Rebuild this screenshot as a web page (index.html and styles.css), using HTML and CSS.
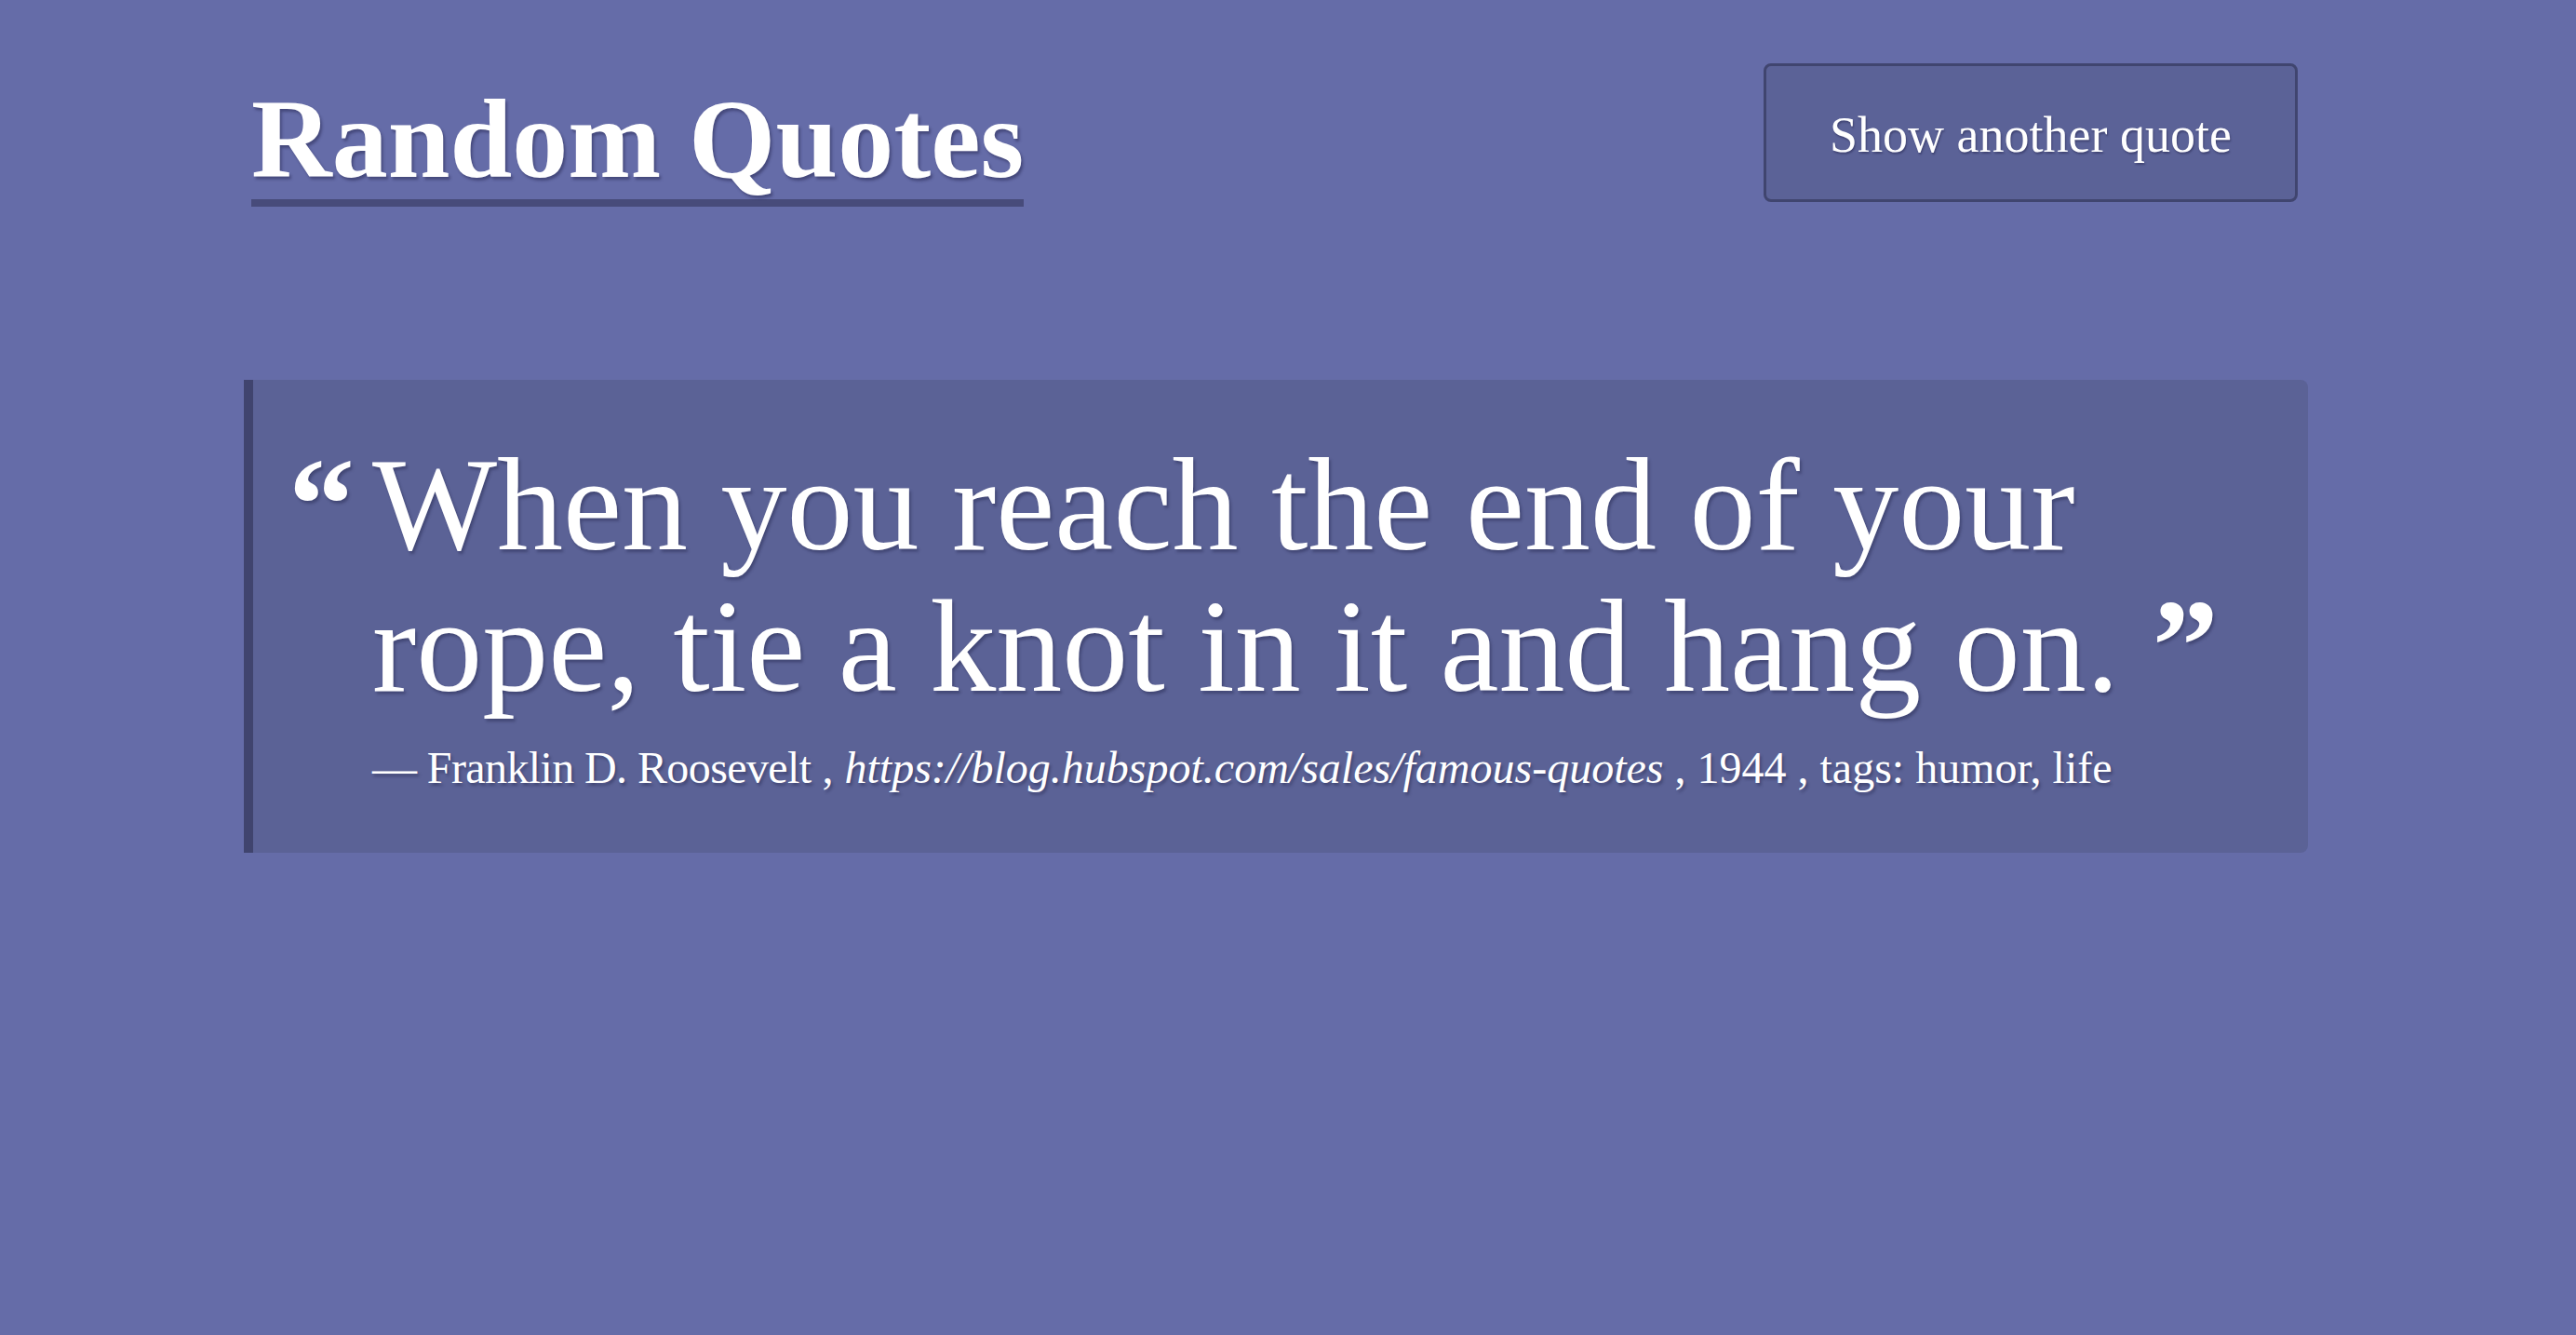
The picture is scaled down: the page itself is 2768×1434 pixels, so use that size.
FILE: index.html
```html
<!DOCTYPE html>
<html lang="en">
<head>
<meta charset="utf-8">
<title>Random Quotes</title>
<link rel="stylesheet" href="styles.css">
</head>
<body>
<div class="page">
  <header class="header">
    <h1 class="title">Random Quotes</h1>
    <button class="btn" type="button">Show another quote</button>
  </header>
  <main class="card">
    <span class="open-mark">“</span>
    <div class="body">
      <p class="quote">When you reach the end of your rope, tie a knot in it and hang on. <span class="close-mark">”</span></p>
      <p class="attr"><span class="author">— Franklin D. Roosevelt</span> , <cite class="src">https://blog.hubspot.com/sales/famous-quotes</cite> , 1944 , tags: humor, life</p>
    </div>
  </main>
</div>
</body>
</html>
```
FILE: styles.css
```css
html, body {
  margin: 0;
  padding: 0;
}
body {
  background: #656ca8;
  color: #ffffff;
  font-family: "Liberation Serif", "Times New Roman", serif;
  min-height: 1434px;
}
.page {
  margin-left: 262px;
  width: 2218px;
  padding-top: 68px;
}
.header {
  display: flex;
  justify-content: space-between;
  align-items: flex-start;
  padding: 0 11px 0 8px;
}
.title {
  margin: 22px 0 0 0;
  font-size: 120px;
  line-height: 120px;
  font-weight: 700;
  padding-bottom: 4px;
  border-bottom: 8px solid #474b7a;
  text-shadow: 2px 3px 3px rgba(30, 32, 70, 0.45);
}
.btn {
  font-family: "Liberation Serif", "Times New Roman", serif;
  font-size: 54px;
  line-height: 65px;
  color: #ffffff;
  background: #5b6297;
  border: 3px solid #40456f;
  border-radius: 8px;
  padding: 42px 68px 36px;
  text-shadow: 1px 2px 2px rgba(30, 32, 70, 0.45);
  cursor: pointer;
}
.card {
  display: flex;
  align-items: flex-start;
  margin-top: 186px;
  background: #5b6296;
  border-left: 10px solid #40446e;
  border-radius: 0 8px 8px 0;
  padding: 58px 80px 64px 38px;
  text-shadow: 2px 3px 3px rgba(30, 32, 70, 0.4);
}
.open-mark {
  font-size: 142px;
  line-height: 152px;
  font-weight: 700;
  width: 90px;
  flex: none;
}
.body {
  flex: 1;
}
.quote {
  margin: 0;
  font-size: 142px;
  line-height: 152px;
}
.close-mark {
  font-weight: 700;
}
.attr {
  margin: 28px 0 0 0;
  font-size: 48px;
  line-height: 54px;
}
.author {
  letter-spacing: -0.6px;
}
.src {
  font-style: italic;
}
```
